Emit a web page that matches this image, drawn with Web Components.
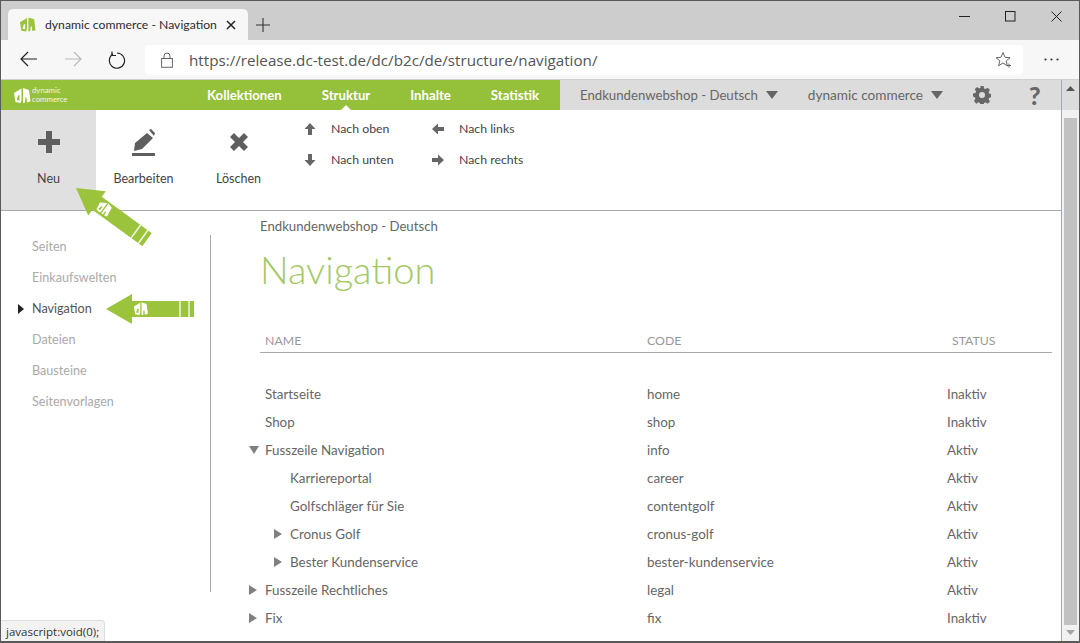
<!DOCTYPE html>
<html lang="de">
<head>
<meta charset="utf-8">
<title>dynamic commerce - Navigation</title>
<style>
  html, body { margin: 0; height: 100%; overflow: hidden; }
  body { font-family: "Lato", "Liberation Sans", sans-serif; background: #fff; }
</style>
</head>
<body>
<browser-window>
  <browser-tabs slot="chrome" title-text="dynamic commerce - Navigation"></browser-tabs>
  <browser-toolbar slot="chrome" url="https://release.dc-test.de/dc/b2c/de/structure/navigation/"></browser-toolbar>
  <dc-topnav></dc-topnav>
  <dc-ribbon></dc-ribbon>
  <div style="display:flex;flex:1;min-height:0">
    <dc-sidebar>
      <dc-side-item>Seiten</dc-side-item>
      <dc-side-item>Einkaufswelten</dc-side-item>
      <dc-side-item active>Navigation</dc-side-item>
      <dc-side-item>Dateien</dc-side-item>
      <dc-side-item>Bausteine</dc-side-item>
      <dc-side-item>Seitenvorlagen</dc-side-item>
    </dc-sidebar>
    <dc-content crumb="Endkundenwebshop - Deutsch" heading="Navigation">
      <dc-row name="Startseite" code="home" status="Inaktiv"></dc-row>
      <dc-row name="Shop" code="shop" status="Inaktiv"></dc-row>
      <dc-row name="Fusszeile Navigation" code="info" status="Aktiv" toggle="open"></dc-row>
      <dc-row name="Karriereportal" code="career" status="Aktiv" depth="1"></dc-row>
      <dc-row name="Golfschl&auml;ger f&uuml;r Sie" code="contentgolf" status="Aktiv" depth="1"></dc-row>
      <dc-row name="Cronus Golf" code="cronus-golf" status="Aktiv" depth="1" toggle="closed"></dc-row>
      <dc-row name="Bester Kundenservice" code="bester-kundenservice" status="Aktiv" depth="1" toggle="closed"></dc-row>
      <dc-row name="Fusszeile Rechtliches" code="legal" status="Aktiv" toggle="closed"></dc-row>
      <dc-row name="Fix" code="fix" status="Inaktiv" toggle="closed"></dc-row>
    </dc-content>
  </div>
  <dc-arrow slot="overlay" style="left:75px;top:172px;transform:rotate(36deg)"></dc-arrow>
  <dc-arrow slot="overlay" style="left:105px;top:293px"></dc-arrow>
  <status-tip slot="overlay">javascript:void(0);</status-tip>
</browser-window>

<script>
// the two tilted cards of the dc logo
const DC_MARK = `
  <path fill-rule="evenodd" d="M1 6 8.500 1.500V13L7.500 16 2.500 15zM5 8.500 3.800 13l2.700.5V8z"/>
  <path fill-rule="evenodd" d="M10 1l6 2 1.500 11.500-3.500 1-.5-5-1.200.2-.3 4.800-2 .5z"/>`;

class BrowserWindow extends HTMLElement {
  constructor() {
    super();
    this.attachShadow({ mode: "open" });
    this.shadowRoot.innerHTML = `
    <style>
      :host {
        display: flex;
        position: relative;
        width: 1080px;
        height: 643px;
        box-sizing: border-box;
        border: 1px solid #5a5a5a;
        border-width: 1px 1px 2px 1px;
        flex-direction: column;
        overflow: hidden;
        background: #fff;
      }
      .page {
        flex: 1;
        min-height: 0;
        display: flex;
      }
      .main {
        flex: 1;
        min-width: 0;
        display: flex;
        flex-direction: column;
      }
      .scroll {
        width: 18px;
        flex: none;
        background: #f1f1f1;
        border-left: 1px solid #9bc33c;
        box-sizing: border-box;
        display: flex;
        flex-direction: column;
        align-items: center;
      }
      .up, .down { width: 100%; display: flex; justify-content: center; }
      .up { height: 38px; padding-top: 6px; box-sizing: border-box; background: linear-gradient(#dcdcdc 30px, #f1f1f1 30px); }
      .down { height: 16px; align-items: center; }
      .thumb { flex: 1; width: 13px; background: #c1c1c1; }
      ::slotted(dc-topnav) { flex: none; }
    </style>
    <slot name="chrome"></slot>
    <div class="page">
      <div class="main"><slot></slot></div>
      <div class="scroll">
        <div class="up"><svg width="9" height="6" viewBox="0 0 9 6"><path d="M4.500 0 9 5H0z" fill="#555"/></svg></div>
        <div class="thumb"></div>
        <div class="down"><svg width="9" height="6" viewBox="0 0 9 6"><path d="M0 0h9L4.500 5z" fill="#a3a3a3"/></svg></div>
      </div>
    </div>
    <slot name="overlay"></slot>`;
  }
}

class BrowserTabs extends HTMLElement {
  constructor() {
    super();
    this.attachShadow({ mode: "open" });
  }
  connectedCallback() {
    this.shadowRoot.innerHTML = `
    <style>
      :host {
        display: flex;
        height: 39px;
        flex: none;
        background: #cdcdcd;
        align-items: flex-end;
        padding-left: 7px;
        font-family: "Lato", "Liberation Sans", sans-serif;
        color: #333;
      }
      .tab {
        width: 240px;
        height: 31px;
        background: #f7f7f7;
        border-radius: 5px 5px 0 0;
        display: flex;
        align-items: center;
        box-sizing: border-box;
        padding: 0 12px 0 11px;
        font-size: 12.200px;
      }
      .tab svg { flex: none; }
      .title { flex: 1; margin-left: 9px; white-space: nowrap; color: #2c2c2c; }
      .new { margin-left: 8px; height: 31px; display: flex; align-items: center; }
      .controls { margin-left: auto; display: flex; height: 39px; }
      .controls div { width: 46px; display: flex; align-items: center; justify-content: center; padding-bottom: 9px; box-sizing: border-box; }
    </style>
    <div class="tab">
      <svg width="17" height="17" viewBox="0 0 18 17" fill="#9bc33c">${DC_MARK}</svg>
      <span class="title">${this.getAttribute("title-text")}</span>
      <svg width="10" height="10" viewBox="0 0 10 10"><path d="M1 1l8 8M9 1 1 9" stroke="#222" stroke-width="1.500" fill="none"/></svg>
    </div>
    <div class="new"><svg width="14" height="14" viewBox="0 0 14 14"><path d="M7 0v14M0 7h14" stroke="#333" stroke-width="1.100" fill="none"/></svg></div>
    <div class="controls">
      <div><svg width="11" height="11" viewBox="0 0 11 11"><path d="M0 5.500h11" stroke="#222" fill="none"/></svg></div>
      <div><svg width="11" height="11" viewBox="0 0 11 11"><rect x=".5" y=".5" width="9.500" height="9.500" stroke="#222" fill="none"/></svg></div>
      <div><svg width="11" height="11" viewBox="0 0 11 11"><path d="M.5.500l10 10M10.500.500l-10 10" stroke="#222" fill="none"/></svg></div>
    </div>`;
  }
}

class BrowserToolbar extends HTMLElement {
  constructor() {
    super();
    this.attachShadow({ mode: "open" });
  }
  connectedCallback() {
    this.shadowRoot.innerHTML = `
    <style>
      :host {
        display: flex;
        height: 39px;
        flex: none;
        background: #f7f7f7;
        border-bottom: 1px solid #d0d0d0;
        align-items: center;
        font-family: "Open Sans", "Liberation Sans", sans-serif;
      }
      .nav { display: flex; width: 144px; padding-left: 6px; box-sizing: border-box; }
      .nav div { width: 44px; display: flex; justify-content: center; }
      .url {
        width: 878px;
        height: 30px;
        background: #fff;
        border-radius: 4px;
        display: flex;
        align-items: center;
        padding: 0 11px 0 16px;
        box-sizing: border-box;
        font-size: 15.200px;
        color: #555;
      }
      .url span { margin-left: 16px; flex: 1; white-space: nowrap; }
      .more { flex: 1; display: flex; justify-content: center; }
    </style>
    <div class="nav">
      <div><svg width="18" height="16" viewBox="0 0 18 16"><path d="M17 8H1M8 1 1 8l7 7" stroke="#222" stroke-width="1.200" fill="none"/></svg></div>
      <div><svg width="18" height="16" viewBox="0 0 18 16"><path d="M1 8h16M10 1l7 7-7 7" stroke="#bbb" stroke-width="1.200" fill="none"/></svg></div>
      <div><svg width="18" height="18" viewBox="0 0 18 18"><path d="M5 3.100a7.600 7.600 0 1 0 4-1.100" stroke="#222" stroke-width="1.200" fill="none"/><path d="M4 .500v4h4" stroke="#222" stroke-width="1.200" fill="none"/></svg></div>
    </div>
    <div class="url">
      <svg width="12" height="16" viewBox="0 0 12 16"><rect x=".6" y="6.500" width="10.800" height="8.800" stroke="#666" fill="none"/><path d="M3 6.500V4a3 3 0 0 1 6 0v2.500" stroke="#666" fill="none"/></svg>
      <span>${this.getAttribute("url")}</span>
      <svg width="17" height="17" viewBox="0 0 17 17"><path d="M8 1.500l2 4.800 5 .4-3.800 3.300 1.200 5L8 12l-4.400 2.800 1.200-5L1 6.700l5-.4z" stroke="#666" fill="none"/><path d="M12 14.500h4M14 12.500v4" stroke="#666" fill="none"/></svg>
    </div>
    <div class="more"><svg width="15" height="3" viewBox="0 0 15 3" fill="#333"><circle cx="1.500" cy="1.500" r="1.100"/><circle cx="7.500" cy="1.500" r="1.100"/><circle cx="13.500" cy="1.500" r="1.100"/></svg></div>`;
  }
}

class DcTopnav extends HTMLElement {
  constructor() {
    super();
    this.attachShadow({ mode: "open" });
    this.shadowRoot.innerHTML = `
    <style>
      :host {
        display: flex;
        height: 30px;
        flex: none;
        background: #95c03a;
        font-size: 13.200px;
        align-items: stretch;
      }
      .logo { width: 186px; display: flex; align-items: center; padding-left: 12px; box-sizing: border-box; color: #fff; }
      .logo span { font-size: 7.800px; line-height: 9px; margin-left: 1px; opacity: .9; }
      .menu { display: flex; width: 373px; }
      a { display: flex; align-items: center; padding: 0 20px; color: #fff; font-weight: 700; position: relative; white-space: nowrap; }
      a.on::after {
        content: "";
        position: absolute;
        left: 50%;
        bottom: 0;
        margin-left: -5px;
        border: 5px solid transparent;
        border-top: 0;
        border-bottom-color: #fff;
      }
      .right { flex: 1; background: #dcdcdc; display: flex; align-items: center; color: #666; }
      .drop { display: flex; align-items: center; gap: 8px; white-space: nowrap; }
      .drop::after { content: ""; border: 6px solid transparent; border-bottom: 0; border-top: 8px solid #666; }
      .q { font-weight: 900; font-size: 25px; color: #666; }
    </style>
    <div class="logo">
      <svg width="18" height="17" viewBox="0 0 18 17" fill="#fff">${DC_MARK}</svg>
      <span>dynamic<br>commerce</span>
    </div>
    <div class="menu">
      <a>Kollektionen</a><a class="on">Struktur</a><a>Inhalte</a><a>Statistik</a>
    </div>
    <div class="right">
      <div class="drop" style="margin-left:20px">Endkundenwebshop - Deutsch</div>
      <div class="drop" style="margin-left:30px;font-size:13.600px">dynamic commerce</div>
      <svg style="margin-left:30px" width="18" height="18" viewBox="0 0 18 18" fill="#666"><path fill-rule="evenodd" d="M7.400 0h3.200l.5 2.500 1.500.6L14.700 1.700l2.300 2.300-1.400 2.100.6 1.500 2.500.5v3.200l-2.500.5-.6 1.500 1.400 2.100-2.300 2.300-2.100-1.400-1.500.6-.5 2.500H7.400l-.5-2.500-1.500-.6-2.100 1.400L1 14.900l1.400-2.100-.6-1.500L0 10.600V7.400l2.500-.5.6-1.500L1.700 3.300 4 1l2.100 1.400 1.500-.6zM9 6a3 3 0 1 0 0 6 3 3 0 0 0 0-6z"/></svg>
      <span class="q" style="margin-left:38px">?</span>
    </div>`;
  }
}

class DcRibbon extends HTMLElement {
  constructor() {
    super();
    this.attachShadow({ mode: "open" });
    this.shadowRoot.innerHTML = `
    <style>
      :host {
        display: flex;
        height: 101px;
        flex: none;
        box-sizing: border-box;
        border-bottom: 1px solid #aaa;
        font-size: 12.500px;
        color: #444;
      }
      .big {
        width: 95px;
        display: flex;
        flex-direction: column;
        align-items: center;
        box-sizing: border-box;
        padding-top: 17px;
      }
      .big svg { height: 30px; }
      .big span { margin-top: 14px; }
      .big.on { background: #e0e0e0; }
      .small { display: grid; grid-template-columns: 128px 110px; grid-auto-rows: 31px; margin-left: 18px; padding-top: 3px; font-size: 12.300px; }
      .small div { display: flex; align-items: center; gap: 15px; white-space: nowrap; }
      .small svg { width: 12px; height: 12px; }
    </style>
    <div class="big on">
      <svg width="22" height="30" viewBox="0 0 22 30"><path d="M8 4h6v8h8v6h-8v8H8v-8H0v-6h8z" fill="#5f5f5f"/></svg>
      <span>Neu</span>
    </div>
    <div class="big">
      <svg width="24" height="30" viewBox="0 0 24 30" fill="#5f5f5f"><path d="M15 6l6 5-11 11-8 2 1-8zM17 3l2-1 4 4-1 3z"/><rect x="0" y="26" width="23" height="3"/></svg>
      <span>Bearbeiten</span>
    </div>
    <div class="big">
      <svg width="20" height="30" viewBox="0 0 20 30"><path d="M5 6l5 5 5-5 4 4-5 5 5 5-4 4-5-5-5 5-4-4 5-5-5-5z" fill="#5f5f5f"/></svg>
      <span>L&ouml;schen</span>
    </div>
    <div class="small">
      <div><svg viewBox="0 0 12 12"><path d="M6 0l5.500 6H8v6H4V6H.5z" fill="#666"/></svg>Nach oben</div>
      <div><svg viewBox="0 0 12 12"><path d="M0 6l6-5.500V4h6v4H6v3.500z" fill="#666"/></svg>Nach links</div>
      <div><svg viewBox="0 0 12 12"><path d="M6 12 .5 6H4V0h4v6h3.500z" fill="#666"/></svg>Nach unten</div>
      <div><svg viewBox="0 0 12 12"><path d="M12 6 6 .5V4H0v4h6v3.500z" fill="#666"/></svg>Nach rechts</div>
    </div>`;
  }
}

class DcSidebar extends HTMLElement {
  constructor() {
    super();
    this.attachShadow({ mode: "open" });
    this.shadowRoot.innerHTML = `
    <style>
      :host {
        display: block;
        width: 210px;
        height: 361px;
        margin-top: 20px;
        flex: none;
        background: linear-gradient(#aaa, #aaa) right 4px / 1px 357px no-repeat;
      }
    </style>
    <slot></slot>`;
  }
}

class DcSideItem extends HTMLElement {
  constructor() {
    super();
    this.attachShadow({ mode: "open" });
    this.shadowRoot.innerHTML = `
    <style>
      :host {
        display: flex;
        align-items: center;
        height: 31px;
        font-size: 12.600px;
        padding-left: 31px;
        color: #aaa;
        position: relative;
      }
      :host([active]) { color: #555; }
      :host([active])::before {
        content: "";
        position: absolute;
        left: 17px;
        border: 5px solid transparent;
        border-right: 0;
        border-left: 6px solid #222;
      }
    </style>
    <slot></slot>`;
  }
}

class DcContent extends HTMLElement {
  constructor() {
    super();
    this.attachShadow({ mode: "open" });
  }
  connectedCallback() {
    this.shadowRoot.innerHTML = `
    <style>
      :host {
        display: block;
        flex: 1;
        min-width: 0;
        padding: 7px 9px 0 49px;
      }
      .crumb { font-size: 13.200px; color: #666; line-height: 16px; }
      h1 { margin: 12px 0 0; font-size: 38px; font-weight: 300; line-height: 46px; color: #a4c866; }
      .head {
        display: grid;
        grid-template-columns: 382px 305px 1fr;
        margin-top: 40px;
        height: 21px;
        box-sizing: border-box;
        padding-left: 5px;
        border-bottom: 1px solid #aaa;
        font-size: 12.300px;
        color: #999;
        line-height: 18px;
      }
      .rows { margin-top: 27px; }
    </style>
    <div class="crumb">${this.getAttribute("crumb")}</div>
    <h1>${this.getAttribute("heading")}</h1>
    <div class="head"><span>NAME</span><span>CODE</span><span>STATUS</span></div>
    <div class="rows"><slot></slot></div>`;
  }
}

class DcRow extends HTMLElement {
  constructor() {
    super();
    this.attachShadow({ mode: "open" });
  }
  connectedCallback() {
    const depth = Number(this.getAttribute("depth") || 0);
    const toggle = this.getAttribute("toggle");
    let caret = "";
    if (toggle === "open") caret = `<svg width="10" height="8" viewBox="0 0 10 8"><path d="M0 0h10L5 8z" fill="#808080"/></svg>`;
    if (toggle === "closed") caret = `<svg width="8" height="10" viewBox="0 0 8 10"><path d="M0 0l8 5-8 5z" fill="#808080"/></svg>`;
    this.shadowRoot.innerHTML = `
    <style>
      :host {
        display: grid;
        grid-template-columns: 387px 300px 1fr;
        height: 28px;
        align-items: center;
        font-size: 13.400px;
        color: #666;
      }
      .name { display: flex; align-items: center; padding-left: ${5 + depth * 25}px; position: relative; white-space: nowrap; }
      .caret { position: absolute; left: ${-11 + depth * 25}px; display: flex; }
    </style>
    <div class="name"><span class="caret">${caret}</span>${this.getAttribute("name")}</div>
    <div>${this.getAttribute("code")}</div>
    <div>${this.getAttribute("status")}</div>`;
  }
}

class DcArrow extends HTMLElement {
  constructor() {
    super();
    this.attachShadow({ mode: "open" });
    this.shadowRoot.innerHTML = `
    <style>
      :host {
        display: block;
        position: absolute;
        width: 88px;
        height: 30px;
        transform-origin: 0 50%;
      }
      svg { display: block; }
    </style>
    <svg width="88" height="30" viewBox="0 0 88 30">
      <path d="M0 15 26 0v7h62v16H26v7z" fill="#9bc33c"/>
      <path d="M74 7v16M83 7v16" stroke="#fff" stroke-width="1.500" fill="none" opacity=".85"/>
      <g transform="translate(27 7.500) scale(.85)" fill="#fff">${DC_MARK}</g>
    </svg>`;
  }
}

class StatusTip extends HTMLElement {
  constructor() {
    super();
    this.attachShadow({ mode: "open" });
    this.shadowRoot.innerHTML = `
    <style>
      :host {
        display: block;
        position: absolute;
        left: 0;
        bottom: 0;
        height: 21px;
        width: 104px;
        box-sizing: border-box;
        padding: 3px 0 0 5px;
        background: #f2f2f2;
        border: 1px solid #ddd;
        border-width: 1px 1px 0 0;
        border-radius: 0 4px 0 0;
        font: 11.500px/15px "Open Sans", "Liberation Sans", sans-serif;
        color: #333;
        white-space: nowrap;
      }
    </style>
    <slot></slot>`;
  }
}

customElements.define("browser-window", BrowserWindow);
customElements.define("browser-tabs", BrowserTabs);
customElements.define("browser-toolbar", BrowserToolbar);
customElements.define("dc-topnav", DcTopnav);
customElements.define("dc-ribbon", DcRibbon);
customElements.define("dc-sidebar", DcSidebar);
customElements.define("dc-side-item", DcSideItem);
customElements.define("dc-content", DcContent);
customElements.define("dc-row", DcRow);
customElements.define("dc-arrow", DcArrow);
customElements.define("status-tip", StatusTip);
</script>
</body>
</html>
